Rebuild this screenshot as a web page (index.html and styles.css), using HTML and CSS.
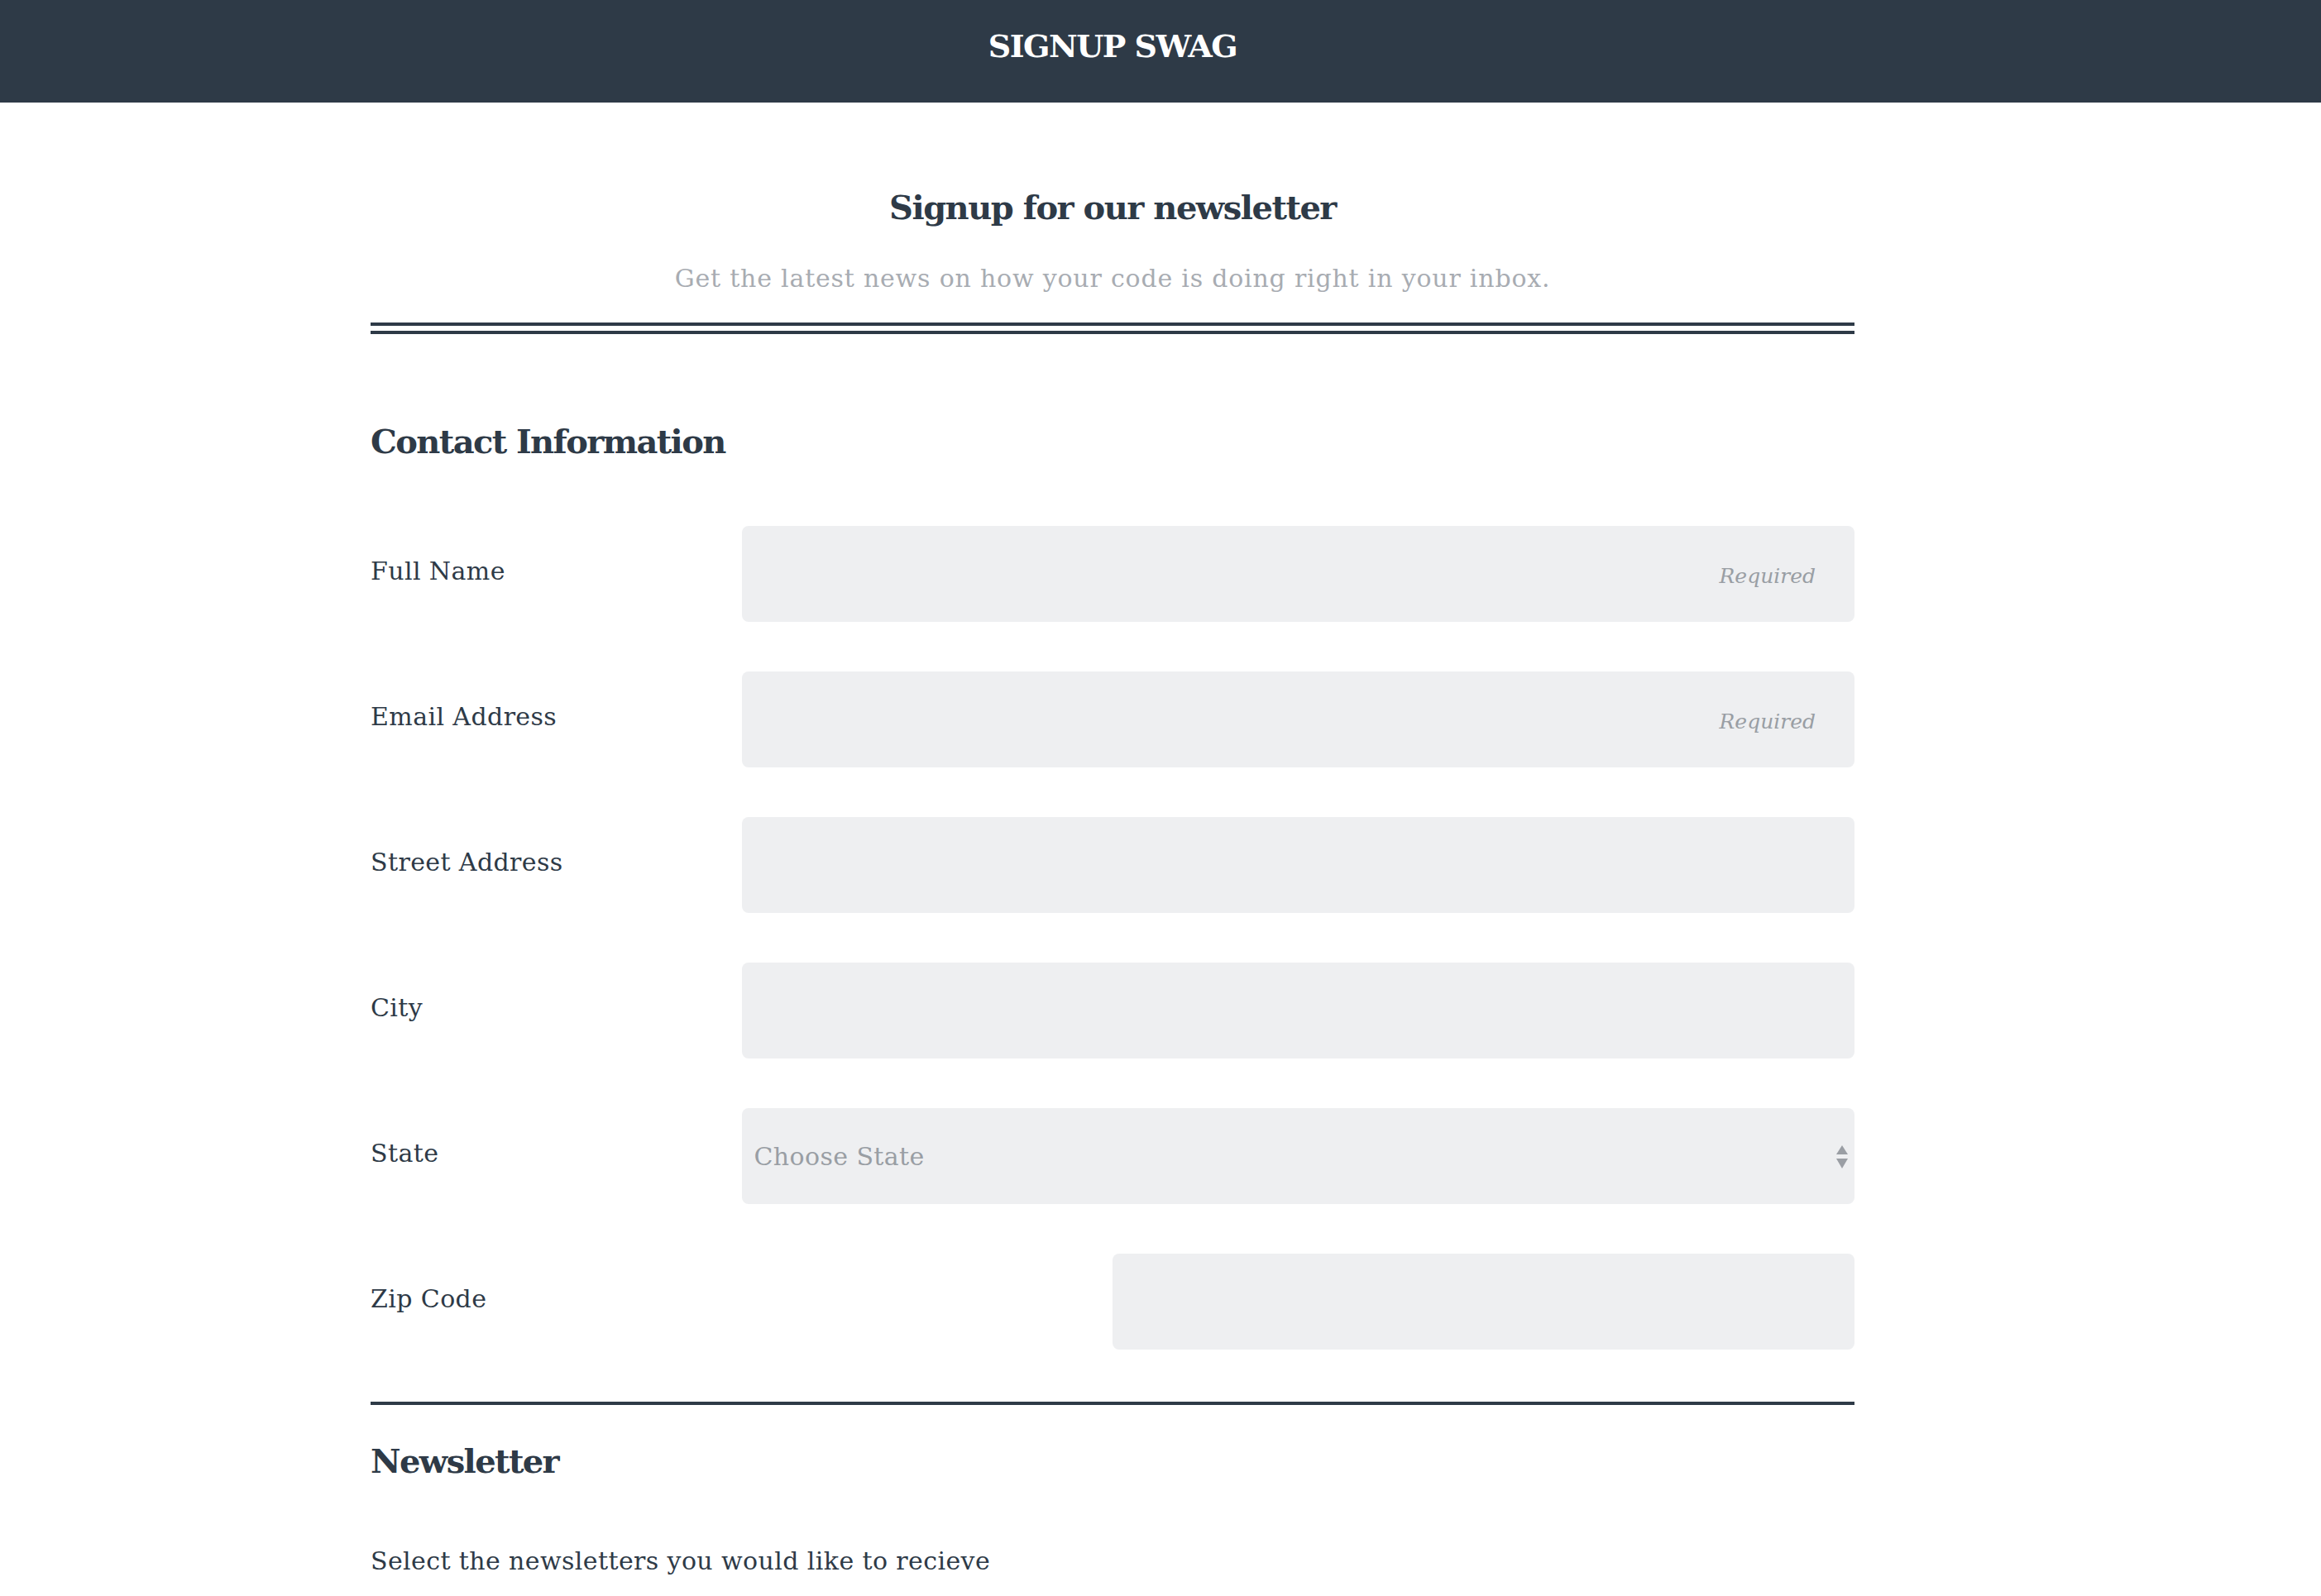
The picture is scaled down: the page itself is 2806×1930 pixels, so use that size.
FILE: index.html
```html
<!DOCTYPE html>
<html lang="en">
<head>
<meta charset="utf-8">
<title>Signup Swag</title>
<link rel="stylesheet" href="styles.css">
</head>
<body>
<header class="topbar">
  <div class="topbar-inner">
    <h1 class="brand">SIGNUP SWAG</h1>
  </div>
</header>
<main class="page">
  <div class="container">
    <div class="intro">
      <h2 class="intro-title">Signup for our newsletter</h2>
      <p class="intro-sub">Get the latest news on how your code is doing right in your inbox.</p>
    </div>
    <hr class="double-rule">
    <section class="section">
      <h3 class="section-title">Contact Information</h3>
      <form class="form">
        <div class="row">
          <label class="label" for="name">Full Name</label>
          <div class="field"><input class="input" id="name" type="text" placeholder="Required"></div>
        </div>
        <div class="row">
          <label class="label" for="email">Email Address</label>
          <div class="field"><input class="input" id="email" type="email" placeholder="Required"></div>
        </div>
        <div class="row">
          <label class="label" for="street">Street Address</label>
          <div class="field"><input class="input" id="street" type="text"></div>
        </div>
        <div class="row">
          <label class="label" for="city">City</label>
          <div class="field"><input class="input" id="city" type="text"></div>
        </div>
        <div class="row">
          <label class="label" for="state">State</label>
          <div class="field select-wrap">
            <select class="select" id="state"><option>Choose State</option></select>
            <svg class="select-arrows" width="14" height="28" viewBox="0 0 14 28" aria-hidden="true">
              <polygon points="7,0 14,11 0,11" fill="#9a9ea4"/>
              <polygon points="0,16 14,16 7,28" fill="#9a9ea4"/>
            </svg>
          </div>
        </div>
        <div class="row">
          <label class="label" for="zip">Zip Code</label>
          <div class="field field-half"><input class="input" id="zip" type="text"></div>
        </div>
      </form>
    </section>
    <hr class="rule">
    <section class="section">
      <h3 class="section-title section-title-news">Newsletter</h3>
      <p class="lead">Select the newsletters you would like to recieve</p>
    </section>
  </div>
</main>
</body>
</html>
```
FILE: styles.css
```css
* { box-sizing: border-box; }

html, body {
  margin: 0;
  padding: 0;
  background: #ffffff;
}

body {
  font-family: "DejaVu Serif", "Liberation Serif", serif;
  font-size: 30px;
  letter-spacing: 0.4px;
  color: #2e3a47;
}

.topbar {
  background: #2e3a47;
  height: 124px;
  padding-bottom: 12px;
}

.topbar-inner {
  width: 2690px;
  text-align: center;
}

.brand {
  margin: 0;
  font-size: 38px;
  line-height: 112px;
  font-weight: 700;
  letter-spacing: -1.5px;
  color: #ffffff;
}

.page {
  width: 2690px;
}

.container {
  width: 1794px;
  margin: 0 auto;
}

.intro {
  text-align: center;
  padding-top: 97px;
}

.intro-title {
  margin: 0;
  font-size: 40px;
  line-height: 60px;
  font-weight: 700;
  letter-spacing: -1.5px;
}

.intro-sub {
  margin: 36px 0 0;
  font-size: 30px;
  line-height: 40px;
  letter-spacing: 0.8px;
  color: #a8acb2;
}

.double-rule {
  margin: 33px 0 0;
  height: 14px;
  border: 0;
  border-top: 4px solid #2e3a47;
  border-bottom: 4px solid #2e3a47;
}

.section-title {
  margin: 100px 0 0;
  font-size: 40px;
  line-height: 60px;
  font-weight: 700;
  letter-spacing: -1.6px;
}

.form {
  margin-top: 72px;
}

.row {
  display: grid;
  grid-template-columns: 1fr 3fr;
  height: 116px;
  margin-bottom: 60px;
}

.row:last-child {
  margin-bottom: 0;
}

.label {
  padding-top: 35px;
  line-height: 40px;
  font-size: 30px;
}

.field {
  position: relative;
}

.field-half {
  width: 66.7%;
  justify-self: end;
}

.input,
.select {
  display: block;
  width: 100%;
  height: 116px;
  border: 0;
  border-radius: 8px;
  background: #eeeff1;
  font-family: inherit;
  font-size: 30px;
  letter-spacing: 0.4px;
  color: #2e3a47;
  padding: 0 47px 0 15px;
  outline: none;
}

.input::placeholder {
  color: #999ea4;
  font-style: italic;
  font-size: 25px;
  letter-spacing: 0;
  text-align: right;
}

.select {
  -webkit-appearance: none;
  appearance: none;
  color: #999ea4;
}

.select-arrows {
  position: absolute;
  right: 8px;
  top: 45px;
  pointer-events: none;
}

.rule {
  margin: 63px 0 0;
  height: 0;
  border: 0;
  border-top: 4px solid #2e3a47;
}

.section-title-news {
  margin-top: 38px;
}

.lead {
  margin: 71px 0 0;
  font-size: 30px;
  line-height: 40px;
}
```
